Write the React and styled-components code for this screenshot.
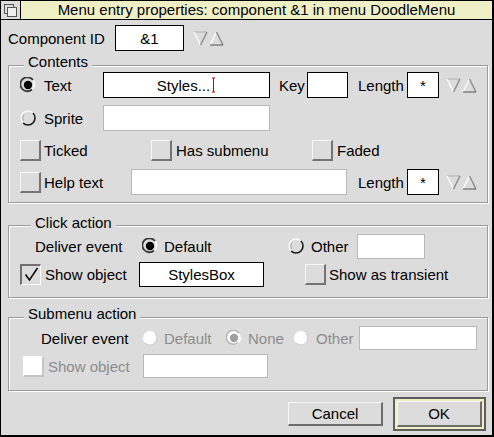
import React from "react";
import styled, { createGlobalStyle } from "styled-components";

const Global = createGlobalStyle`
  html, body {
    margin: 0;
    padding: 0;
    background: #dcdcdc;
  }
  body {
    font-family: "Liberation Sans", Arial, sans-serif;
    font-size: 15px;
    color: #000;
  }
`;

const Window = styled.div`
  width: 494px;
  height: 437px;
  box-sizing: border-box;
  border-left: 1px solid #000;
  border-top: 1px solid #000;
  border-right: 2px solid #000;
  border-bottom: 2px solid #000;
  background: #dcdcdc;
  display: flex;
  flex-direction: column;
`;

const TitleBar = styled.div`
  display: flex;
  height: 18px;
  border-bottom: 1px solid #000;
`;

const BackIcon = styled.div`
  width: 19px;
  border-right: 1px solid #000;
  background: #dcdcdc;
  display: flex;
  align-items: center;
  justify-content: center;
`;

const Title = styled.div`
  flex: 1;
  background: #efefc6;
  text-align: center;
  line-height: 18px;
  white-space: nowrap;
`;

const Body = styled.div`
  display: flex;
  flex-direction: column;
  padding-left: 7px;
`;

const Row = styled.div`
  display: flex;
  align-items: center;
  height: ${(p) => p.$h || 26}px;
  margin-top: ${(p) => p.$mt || 0}px;
`;

const Label = styled.span`
  flex: none;
  display: inline-block;
  width: ${(p) => (p.$w ? p.$w + "px" : "auto")};
  margin-left: ${(p) => p.$ml || 0}px;
  color: ${(p) => (p.$dim ? "#8c8c8c" : "#000")};
  white-space: nowrap;
`;

const Field = styled.div`
  flex: none;
  box-sizing: border-box;
  width: ${(p) => p.$w}px;
  height: ${(p) => p.$h || 26}px;
  margin-left: ${(p) => p.$ml || 0}px;
  background: #fff;
  border: 1px solid ${(p) => (p.$strong ? "#000" : "#b8b8b8")};
  display: flex;
  align-items: center;
  justify-content: center;
  white-space: nowrap;
`;

const Choice = styled.div`
  flex: none;
  display: flex;
  align-items: center;
  width: ${(p) => (p.$w ? p.$w + "px" : "auto")};
  margin-left: ${(p) => p.$ml || 0}px;
  gap: ${(p) => (p.$gap != null ? p.$gap : 8)}px;
`;

const Frame = styled.section`
  position: relative;
  box-sizing: border-box;
  width: 480px;
  margin-top: ${(p) => p.$mt}px;
  padding: ${(p) => p.$pt}px 0 ${(p) => p.$pb}px 11px;
  border: 1px solid #9c9c9c;
  box-shadow: inset 1px 1px 0 #fff, 1px 1px 0 #fff;
`;

const Legend = styled.span`
  position: absolute;
  top: ${(p) => p.$top}px;
  left: ${(p) => p.$left}px;
  padding: 0 4px;
  background: #dcdcdc;
  line-height: 16px;
`;

const Box = styled.span`
  flex: none;
  box-sizing: border-box;
  width: 21px;
  height: 21px;
  display: flex;
  align-items: center;
  justify-content: center;
  background: ${(p) => (p.$disabled ? "#fff" : "#dcdcdc")};
  border-style: solid;
  border-width: ${(p) => (p.$checked ? "2px 1px 1px 2px" : "1px 2px 2px 1px")};
  border-color: ${(p) =>
    p.$disabled
      ? "#fff #c6c6c6 #c6c6c6 #fff"
      : p.$checked
      ? "#707070 #fff #fff #707070"
      : "#f6f6f6 #747474 #747474 #f6f6f6"};
`;

const ButtonRow = styled.div`
  display: flex;
  justify-content: flex-end;
  align-items: center;
  height: 34px;
  margin-top: 6px;
  padding-right: 6px;
`;

const Button = styled.button`
  box-sizing: border-box;
  width: ${(p) => (p.$fill ? "100%" : "95px")};
  height: ${(p) => (p.$fill ? "100%" : "24px")};
  padding: 0;
  font: inherit;
  color: #000;
  background: #dcdcdc;
  border-style: solid;
  border-width: 1px 2px 2px 1px;
  border-color: #f6f6f6 #6c6c6c #6c6c6c #f6f6f6;
`;

const DefaultRing = styled.div`
  box-sizing: border-box;
  width: 93px;
  height: 34px;
  margin-left: 10px;
  border: 2px solid #5e5e5e;
  padding: 2px;
  background: #f0f0c8;
  display: flex;
`;

const Caret = styled.svg`
  flex: none;
  margin-left: 1px;
`;

function Radio({ kind }) {
  return (
    <svg width="16" height="16" viewBox="0 0 16 16" style={{ flex: "none" }}>
      {kind === "off" && (
        <>
          <circle cx="8" cy="8" r="7" fill="#dcdcdc" />
          <path d="M3.05 12.95 A7 7 0 0 1 12.95 3.05" stroke="#f8f8f8" strokeWidth="1.5" fill="none" />
          <path d="M4 4.5 A6 6 0 0 0 3.5 11" stroke="#a8a8a8" strokeWidth="1" fill="none" />
          <path d="M12.95 3.05 A7 7 0 0 1 3.05 12.95" stroke="#1c1c1c" strokeWidth="1.6" fill="none" />
        </>
      )}
      {kind === "on" && (
        <>
          <circle cx="8" cy="8" r="7" fill="#dcdcdc" />
          <path d="M12.95 3.05 A7 7 0 0 1 12 12.5" stroke="#fff" strokeWidth="1.6" fill="none" />
          <path d="M12.95 3.05 A7 7 0 1 0 12 12.5" stroke="#3a3a3a" strokeWidth="1.8" fill="none" />
          <circle cx="8" cy="8" r="4.2" fill="#000" />
        </>
      )}
      {kind === "disOff" && (
        <>
          <circle cx="8" cy="8" r="7" fill="#fff" />
          <path d="M12.95 3.05 A7 7 0 0 1 3.05 12.95" stroke="#cfcfcf" strokeWidth="1.2" fill="none" />
        </>
      )}
      {kind === "disOn" && (
        <>
          <circle cx="8" cy="8" r="7" fill="#fff" />
          <path d="M12.95 3.05 A7 7 0 1 0 12 12.5" stroke="#b4b4b4" strokeWidth="1.4" fill="none" />
          <circle cx="8" cy="8" r="4.2" fill="#a0a0a0" />
        </>
      )}
    </svg>
  );
}

function Adjuster({ ml }) {
  return (
    <svg width="32" height="16" viewBox="0 0 32 16" style={{ flex: "none", marginLeft: ml }}>
      <line x1="1" y1="2" x2="14" y2="2" stroke="#b0b0b0" strokeWidth="1" />
      <line x1="1" y1="2" x2="7.5" y2="15" stroke="#fdfdfd" strokeWidth="1.4" />
      <line x1="14" y1="2" x2="7.5" y2="15" stroke="#8a8a8a" strokeWidth="1.4" />
      <line x1="23.5" y1="2" x2="17" y2="15" stroke="#fdfdfd" strokeWidth="1.4" />
      <line x1="23.5" y1="2" x2="30" y2="15" stroke="#8a8a8a" strokeWidth="1.4" />
      <line x1="17" y1="15" x2="30" y2="15" stroke="#6a6a6a" strokeWidth="1.2" />
    </svg>
  );
}

function Check({ checked, disabled }) {
  return (
    <Box $checked={checked} $disabled={disabled}>
      {checked && (
        <svg width="15" height="15" viewBox="0 0 15 15">
          <polyline points="1.5,7.5 5.5,13 13.5,1" fill="none" stroke="#000" strokeWidth="1.5" />
        </svg>
      )}
    </Box>
  );
}

export default function App() {
  return (
    <>
      <Global />
      <Window>
        <TitleBar>
          <BackIcon>
            <svg width="15" height="15" viewBox="0 0 15 15">
              <rect x="1.5" y="1.5" width="9" height="9" fill="#dcdcdc" stroke="#555" />
              <rect x="4.5" y="4.5" width="9" height="9" fill="#efefef" stroke="#555" />
            </svg>
          </BackIcon>
          <Title>Menu entry properties: component &amp;1 in menu DoodleMenu</Title>
        </TitleBar>

        <Body>
          <Row $mt={5}>
            <Label $w={107}>Component ID</Label>
            <Field $w={69} $strong>&amp;1</Field>
            <Adjuster ml={9} />
          </Row>

          <Frame $mt={14} $pt={6} $pb={7}>
            <Legend $top={-12} $left={15}>Contents</Legend>
            <Row>
              <Choice $w={83}>
                <Radio kind="on" />
                <Label>Text</Label>
              </Choice>
              <Field $w={167} $strong>
                Styles...
                <Caret width="5" height="16" viewBox="0 0 5 16">
                  <line x1="2.5" y1="1" x2="2.5" y2="15" stroke="#d00000" strokeWidth="1" />
                  <line x1="1" y1="1" x2="4" y2="1" stroke="#d00000" strokeWidth="1" />
                  <line x1="1" y1="15" x2="4" y2="15" stroke="#d00000" strokeWidth="1" />
                </Caret>
              </Field>
              <Label $ml={9} $w={28}>Key</Label>
              <Field $w={41} $strong />
              <Label $ml={10} $w={49}>Length</Label>
              <Field $w={32} $strong>*</Field>
              <Adjuster ml={7} />
            </Row>
            <Row $mt={7}>
              <Choice $w={83}>
                <Radio kind="off" />
                <Label>Sprite</Label>
              </Choice>
              <Field $w={167} />
            </Row>
            <Row $mt={6}>
              <Choice $w={131} $gap={3}>
                <Check />
                <Label>Ticked</Label>
              </Choice>
              <Choice $w={161} $gap={4}>
                <Check />
                <Label>Has submenu</Label>
              </Choice>
              <Choice $gap={4}>
                <Check />
                <Label>Faded</Label>
              </Choice>
            </Row>
            <Row $mt={6}>
              <Choice $w={111} $gap={3}>
                <Check />
                <Label>Help text</Label>
              </Choice>
              <Field $w={216} />
              <Label $ml={11} $w={49}>Length</Label>
              <Field $w={32} $strong>*</Field>
              <Adjuster ml={7} />
            </Row>
          </Frame>

          <Frame $mt={22} $pt={7} $pb={10}>
            <Legend $top={-11} $left={22}>Click action</Legend>
            <Row>
              <Label $ml={15} $w={107}>Deliver event</Label>
              <Choice $w={146} $gap={6}>
                <Radio kind="on" />
                <Label>Default</Label>
              </Choice>
              <Choice $w={69} $gap={7}>
                <Radio kind="off" />
                <Label>Other</Label>
              </Choice>
              <Field $w={68} $h={25} />
            </Row>
            <Row $mt={2}>
              <Choice $w={119} $gap={4}>
                <Check checked />
                <Label>Show object</Label>
              </Choice>
              <Field $w={125} $h={25} $strong>StylesBox</Field>
              <Choice $ml={41} $gap={3}>
                <Check />
                <Label>Show as transient</Label>
              </Choice>
            </Row>
          </Frame>

          <Frame $mt={19} $pt={8} $pb={12}>
            <Legend $top={-12} $left={15}>Submenu action</Legend>
            <Row $h={24}>
              <Label $ml={21} $w={101}>Deliver event</Label>
              <Choice $w={84} $gap={6}>
                <Radio kind="disOff" />
                <Label $dim>Default</Label>
              </Choice>
              <Choice $w={67} $gap={6}>
                <Radio kind="disOn" />
                <Label $dim>None</Label>
              </Choice>
              <Choice $w={66} $gap={7}>
                <Radio kind="disOff" />
                <Label $dim>Other</Label>
              </Choice>
              <Field $w={118} $h={24} />
            </Row>
            <Row $h={24} $mt={4}>
              <Choice $ml={3} $w={120} $gap={4}>
                <Check disabled />
                <Label $dim>Show object</Label>
              </Choice>
              <Field $w={125} $h={24} />
            </Row>
          </Frame>

          <ButtonRow>
            <Button>Cancel</Button>
            <DefaultRing>
              <Button $fill>OK</Button>
            </DefaultRing>
          </ButtonRow>
        </Body>
      </Window>
    </>
  );
}
